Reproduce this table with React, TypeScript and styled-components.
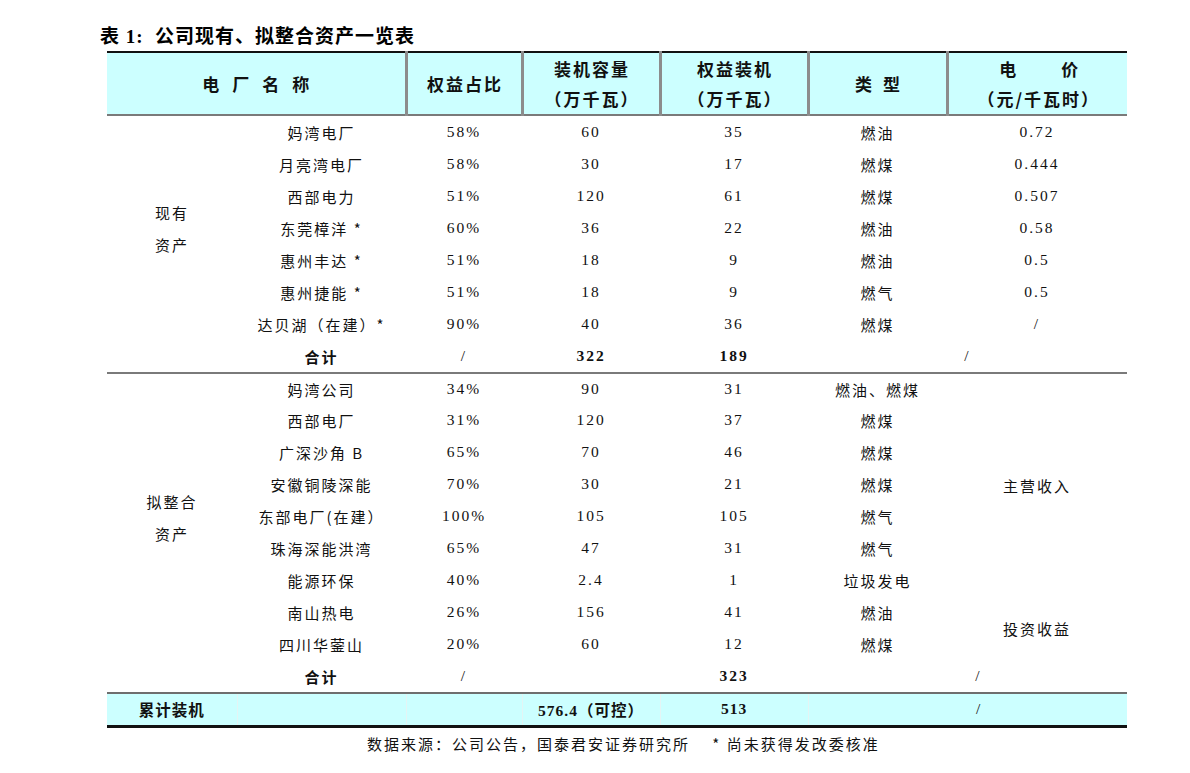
import React from 'react'
import styled, { createGlobalStyle } from 'styled-components'

const GlobalStyle = createGlobalStyle`
  html, body {
    margin: 0;
    padding: 0;
    background: #ffffff;
  }
  body {
    font-family: "Liberation Serif", "Noto Sans CJK SC", serif;
    color: #111111;
  }
`

interface Plant {
  name: string
  share: string
  capacity: string
  equity: string
  kind: string
  price?: string
}

const EXISTING: Plant[] = [
  { name: '妈湾电厂', share: '58%', capacity: '60', equity: '35', kind: '燃油', price: '0.72' },
  { name: '月亮湾电厂', share: '58%', capacity: '30', equity: '17', kind: '燃煤', price: '0.444' },
  { name: '西部电力', share: '51%', capacity: '120', equity: '61', kind: '燃煤', price: '0.507' },
  { name: '东莞樟洋 *', share: '60%', capacity: '36', equity: '22', kind: '燃油', price: '0.58' },
  { name: '惠州丰达 *', share: '51%', capacity: '18', equity: '9', kind: '燃油', price: '0.5' },
  { name: '惠州捷能 *', share: '51%', capacity: '18', equity: '9', kind: '燃气', price: '0.5' },
  { name: '达贝湖（在建）*', share: '90%', capacity: '40', equity: '36', kind: '燃煤', price: '/' },
]

const MERGING: Plant[] = [
  { name: '妈湾公司', share: '34%', capacity: '90', equity: '31', kind: '燃油、燃煤' },
  { name: '西部电厂', share: '31%', capacity: '120', equity: '37', kind: '燃煤' },
  { name: '广深沙角 B', share: '65%', capacity: '70', equity: '46', kind: '燃煤' },
  { name: '安徽铜陵深能', share: '70%', capacity: '30', equity: '21', kind: '燃煤' },
  { name: '东部电厂(在建）', share: '100%', capacity: '105', equity: '105', kind: '燃气' },
  { name: '珠海深能洪湾', share: '65%', capacity: '47', equity: '31', kind: '燃气' },
  { name: '能源环保', share: '40%', capacity: '2.4', equity: '1', kind: '垃圾发电' },
  { name: '南山热电', share: '26%', capacity: '156', equity: '41', kind: '燃油' },
  { name: '四川华蓥山', share: '20%', capacity: '60', equity: '12', kind: '燃煤' },
]

export default function App() {
  return (
    <Page>
      <GlobalStyle />
      <Title>表 1:  公司现有、拟整合资产一览表</Title>
      <Table>
        <colgroup>
          <col style={{ width: 130 }} />
          <col style={{ width: 169 }} />
          <col style={{ width: 116 }} />
          <col style={{ width: 138 }} />
          <col style={{ width: 148 }} />
          <col style={{ width: 139 }} />
          <col style={{ width: 180 }} />
        </colgroup>
        <thead>
          <tr>
            <HeadCell colSpan={2} $spacing={13}>电厂名称</HeadCell>
            <HeadCell>权益占比</HeadCell>
            <HeadCell>
              装机容量
              <br />
              （万千瓦）
            </HeadCell>
            <HeadCell>
              权益装机
              <br />
              （万千瓦）
            </HeadCell>
            <HeadCell $spacing={11}>类型</HeadCell>
            <HeadCell $last>
              <Wide>电　价</Wide>
              <br />
              （元/千瓦时）
            </HeadCell>
          </tr>
        </thead>
        <tbody>
          {EXISTING.map((p, i) => (
            <tr key={p.name}>
              {i === 0 && (
                <GroupCell rowSpan={EXISTING.length}>
                  现有
                  <br />
                  资产
                </GroupCell>
              )}
              <TextCell>{p.name}</TextCell>
              <NumCell>{p.share}</NumCell>
              <NumCell>{p.capacity}</NumCell>
              <NumCell>{p.equity}</NumCell>
              <TextCell>{p.kind}</TextCell>
              <NumCell>{p.price}</NumCell>
            </tr>
          ))}
          <tr>
            <TextCell colSpan={2} $bold $indent={130}>合计</TextCell>
            <NumCell>/</NumCell>
            <NumCell $bold>322</NumCell>
            <NumCell $bold>189</NumCell>
            <NumCell colSpan={2}>/</NumCell>
          </tr>
          {MERGING.map((p, i) => (
            <tr key={p.name}>
              {i === 0 && (
                <GroupCell rowSpan={MERGING.length} $top>
                  拟整合
                  <br />
                  资产
                </GroupCell>
              )}
              <TextCell $top={i === 0}>{p.name}</TextCell>
              <NumCell $top={i === 0}>{p.share}</NumCell>
              <NumCell $top={i === 0}>{p.capacity}</NumCell>
              <NumCell $top={i === 0}>{p.equity}</NumCell>
              <TextCell $top={i === 0}>{p.kind}</TextCell>
              {i === 0 && (
                <TextCell rowSpan={7} $top>
                  主营收入
                </TextCell>
              )}
              {i === 7 && <TextCell rowSpan={2}>投资收益</TextCell>}
            </tr>
          ))}
          <tr>
            <TextCell colSpan={2} $bold $indent={130}>合计</TextCell>
            <NumCell>/</NumCell>
            <NumCell />
            <NumCell $bold>323</NumCell>
            <NumCell colSpan={2} $shift={22}>/</NumCell>
          </tr>
        </tbody>
        <tfoot>
          <tr>
            <FootCell $bold $sep>累计装机</FootCell>
            <FootCell $sep />
            <FootCell $sep />
            <FootCell $bold $sep>576.4（可控）</FootCell>
            <FootCell $bold $sep>513</FootCell>
            <FootCell colSpan={2} $shift={22}>/</FootCell>
          </tr>
        </tfoot>
      </Table>
      <Note>数据来源：公司公告，国泰君安证券研究所　 * 尚未获得发改委核准</Note>
    </Page>
  )
}

const Page = styled.div`
  padding: 23px 0 20px 100px;
  width: 1090px;
`

const Title = styled.div`
  height: 28px;
  line-height: 28px;
  font-size: 19px;
  font-weight: 700;
  letter-spacing: 1px;
  white-space: pre;
  color: #000000;
`

const Table = styled.table`
  margin-left: 7px;
  width: 1020px;
  table-layout: fixed;
  border-collapse: collapse;
  border-top: 2px solid #111111;
`

const HeadCell = styled.th<{ $spacing?: number; $last?: boolean }>`
  height: 61px;
  padding: 0 0 0 ${(p) => p.$spacing ?? 2}px;
  background: #ccffff;
  border-bottom: 2px solid #7a7a7a;
  border-right: ${(p) => (p.$last ? 'none' : '3px solid #8c8c8c')};
  font-family: "Noto Sans CJK SC", sans-serif;
  font-size: 17px;
  font-weight: 700;
  line-height: 30px;
  letter-spacing: ${(p) => p.$spacing ?? 2}px;
  text-align: center;
  vertical-align: middle;
  color: #111111;
`

const Wide = styled.span`
  letter-spacing: 14px;
  padding-left: 14px;
`

const BodyCell = styled.td<{ $bold?: boolean; $top?: boolean; $indent?: number; $shift?: number }>`
  height: ${(p) => (p.$top ? 30 : 32)}px;
  padding: 0 0 0 ${(p) => (p.$indent ?? 0) + (p.$shift ?? 0)}px;
  border-top: ${(p) => (p.$top ? '2px solid #7a7a7a' : 'none')};
  text-align: center;
  vertical-align: middle;
  white-space: nowrap;
  font-weight: ${(p) => (p.$bold ? 700 : 400)};
  color: #111111;
`

const TextCell = styled(BodyCell)`
  font-family: "Noto Sans CJK SC", sans-serif;
  font-size: 15px;
  letter-spacing: 2px;
`

const NumCell = styled(BodyCell)`
  font-family: "Liberation Serif", "Noto Sans CJK SC", serif;
  font-size: 15.5px;
  letter-spacing: 2px;
`

const GroupCell = styled(TextCell)`
  line-height: 32px;
  padding-top: 2px;
`

const FootCell = styled.td<{ $bold?: boolean; $sep?: boolean; $shift?: number }>`
  height: 29px;
  padding: 0 0 2px ${(p) => p.$shift ?? 0}px;
  background: #ccffff;
  border-top: 2px solid #6e6e6e;
  border-bottom: 3px solid #111111;
  border-right: ${(p) => (p.$sep ? '1px solid #e4f4f4' : 'none')};
  font-family: "Liberation Serif", "Noto Sans CJK SC", serif;
  font-size: 15.5px;
  font-weight: ${(p) => (p.$bold ? 700 : 400)};
  letter-spacing: 1px;
  text-align: center;
  vertical-align: middle;
  white-space: nowrap;
  color: #111111;
`

const Note = styled.div`
  margin: 6px 0 0 267px;
  font-family: "Noto Sans CJK SC", sans-serif;
  font-size: 15px;
  line-height: 20px;
  letter-spacing: 2px;
  color: #111111;
`
